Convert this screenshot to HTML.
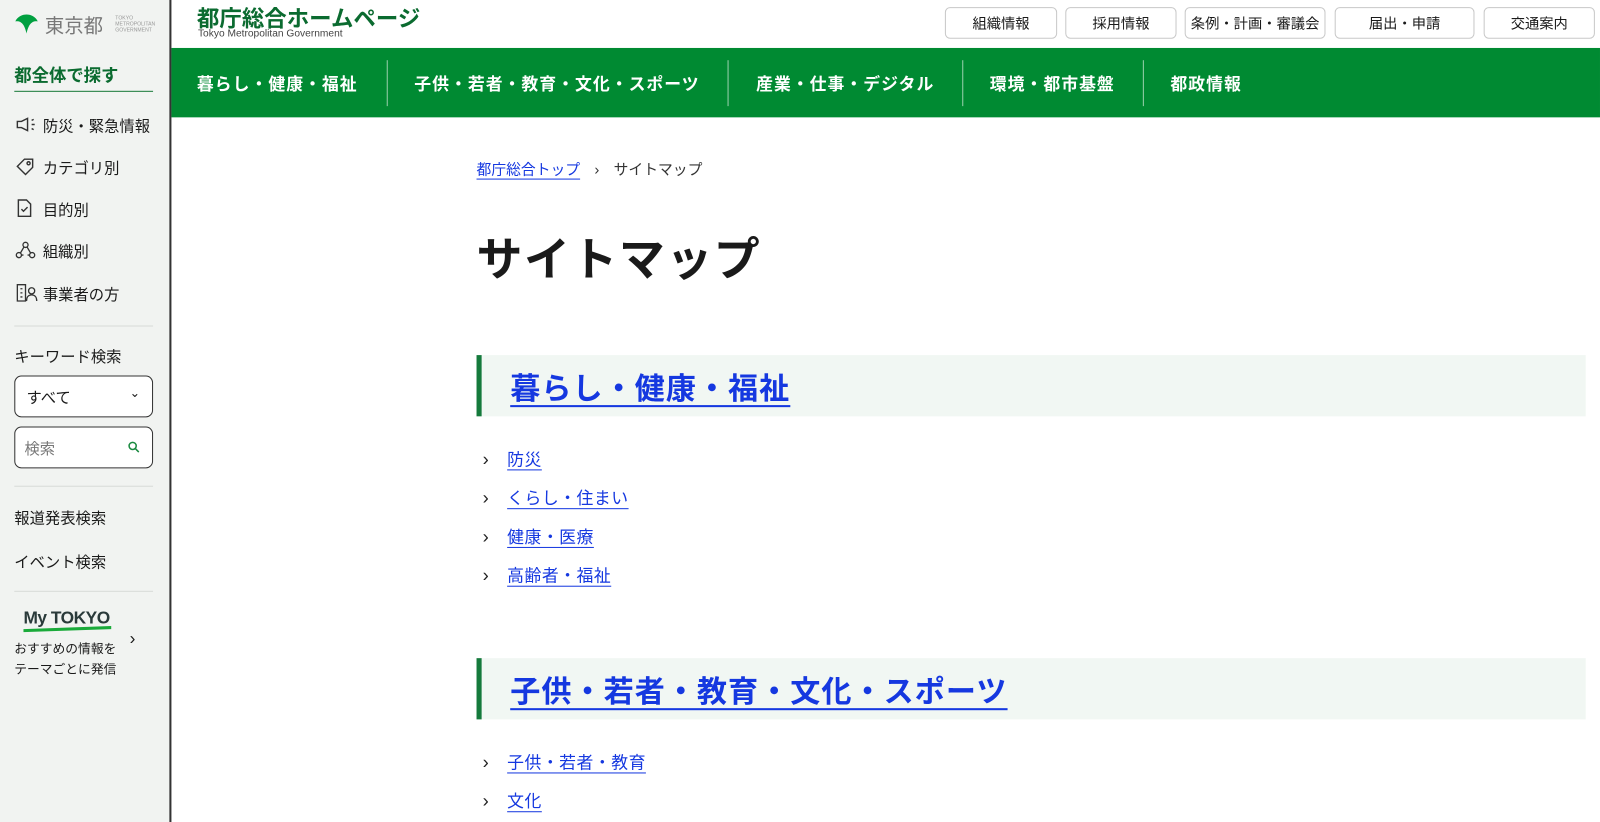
<!DOCTYPE html>
<html><head><meta charset="utf-8"><style>
*{margin:0;padding:0;box-sizing:border-box}
html,body{width:1600px;height:822px;overflow:hidden;background:#fff}
body{font-family:"Liberation Sans","Noto Sans CJK JP",sans-serif;color:#1a1a1a}
#w{position:absolute;left:0;top:0;width:1568px;height:806px;transform:scale(1.0204);transform-origin:0 0}
.a{position:absolute;white-space:nowrap}
#side{position:absolute;left:0;top:0;width:168px;height:806px;background:#f1f3f1;border-right:2px solid #333}
.si{font-size:15px;color:#1a1a1a}
.hr{position:absolute;left:14px;width:136px;height:1px;background:#d8dbd8}
.btn{position:absolute;top:7px;height:31px;border:1px solid #c8c8c8;border-radius:5px;font-size:14px;display:flex;align-items:center;justify-content:center;background:#fff}
#nav{position:absolute;left:168px;top:47px;width:1400px;height:68px;background:#008a32}
.ni{position:absolute;top:22px;color:#fff;font-weight:bold;font-size:16.5px;white-space:nowrap;letter-spacing:1px}
.dv{position:absolute;top:12px;width:1px;height:45px;background:rgba(255,255,255,.6)}
a{color:#1538e0;text-decoration:underline;text-decoration-thickness:1px}
.h2{position:absolute;left:467px;width:1087px;height:60px;background:#f1f7f3;border-left:5px solid #157a3c}
.h2 a{position:absolute;left:28px;top:10px;font-size:29.5px;font-weight:bold;text-underline-offset:6px;text-decoration-thickness:2px;white-space:nowrap;letter-spacing:1px}
.li{position:absolute;left:473px;font-size:16.5px;white-space:nowrap;letter-spacing:.5px}
.li span{display:inline-block;width:24px;color:#222;font-size:18px}
.li a{text-underline-offset:4px}
</style></head><body><div id="w">
<div id="side">
<svg class="a" style="left:14px;top:13px" width="24" height="22" viewBox="0 0 24 22"><path d="M1 8 C5 -1 19 -1 23 8 C18 7 14 10 12 20 C10 10 6 7 1 8Z" fill="#00a040"/></svg>
<div class="a" style="left:44px;top:11px;font-size:19px;color:#777">東京都</div>
<div class="a" style="left:113px;top:15px;font-size:5px;color:#999;line-height:6px">TOKYO<br>METROPOLITAN<br>GOVERNMENT</div>
<div class="a" style="left:14px;top:60px;font-size:17px;font-weight:bold;color:#0b6b30">都全体で探す</div>
<div class="a" style="left:14px;top:89px;width:136px;height:1px;background:#1a7a3a"></div>
<svg class="a" style="left:15px;top:114px" width="22" height="16" viewBox="0 0 22 16" fill="none" stroke="#333" stroke-width="1.4"><path d="M2 5h4l6-3v12l-6-3H2z"/><path d="M16 4l2-1M16 8h3M16 12l2 1"/></svg>
<div class="a si" style="left:42px;top:113px">防災・緊急情報</div>
<svg class="a" style="left:15px;top:154px" width="20" height="18" viewBox="0 0 20 18" fill="none" stroke="#333" stroke-width="1.4"><path d="M2 9l7-7h8v8l-7 7z"/><circle cx="13" cy="6" r="1.5"/></svg>
<div class="a si" style="left:42px;top:154px">カテゴリ別</div>
<svg class="a" style="left:16px;top:195px" width="16" height="18" viewBox="0 0 16 18" fill="none" stroke="#333" stroke-width="1.4"><path d="M2 1h8l4 4v12H2z"/><path d="M5 10l2 2 4-4"/></svg>
<div class="a si" style="left:42px;top:195px">目的別</div>
<svg class="a" style="left:15px;top:236px" width="20" height="18" viewBox="0 0 20 18" fill="none" stroke="#333" stroke-width="1.3"><circle cx="10" cy="4" r="2.5"/><circle cx="3.5" cy="14" r="2.5"/><circle cx="16.5" cy="14" r="2.5"/><path d="M8.5 6L5 12M11.5 6l3.5 6M6 14h2M12 14h2"/></svg>
<div class="a si" style="left:42px;top:236px">組織別</div>
<svg class="a" style="left:15px;top:278px" width="22" height="18" viewBox="0 0 22 18" fill="none" stroke="#333" stroke-width="1.3"><path d="M2 1h8v16H2zM5 5h2M5 9h2M5 13h2"/><circle cx="16" cy="7" r="3"/><path d="M11 17c0-4 2-6 5-6s5 2 5 6"/></svg>
<div class="a si" style="left:42px;top:278px">事業者の方</div>
<div class="hr" style="top:319px"></div>
<div class="a si" style="left:14px;top:339px">キーワード検索</div>
<div class="a" style="left:14px;top:368px;width:136px;height:41px;border:1px solid #333;border-radius:7px;background:#fff"><span class="a" style="left:11px;top:10px;font-size:15px">すべて</span><span class="a" style="left:112px;top:9px;font-size:12px">⌄</span></div>
<div class="a" style="left:14px;top:418px;width:136px;height:41px;border:1px solid #333;border-radius:7px;background:#fff"><span class="a" style="left:9px;top:10px;font-size:15px;color:#777">検索</span><svg class="a" style="left:110px;top:13px" width="12" height="12" viewBox="0 0 12 12" fill="none" stroke="#1a8a40" stroke-width="1.5"><circle cx="5" cy="5" r="3.5"/><path d="M7.5 7.5L11 11"/></svg></div>
<div class="hr" style="top:476px"></div>
<div class="a si" style="left:14px;top:497px">報道発表検索</div>
<div class="a si" style="left:14px;top:540px">イベント検索</div>
<div class="hr" style="top:579px"></div>
<div class="a" style="left:23px;top:596px;font-size:17px;font-weight:bold;color:#2a3a3a;letter-spacing:-.5px">My TOKYO</div>
<div class="a" style="left:23px;top:615px;width:86px;height:3px;background:#1aaa3a;transform:skewY(-2deg)"></div>
<div class="a" style="left:14px;top:626px;font-size:12.5px;line-height:20px">おすすめの情報を<br>テーマごとに発信</div>
<div class="a" style="left:127px;top:616px;font-size:17px">›</div>
</div>

<div class="a" style="left:193px;top:1px;font-size:22px;font-weight:bold;color:#0b6b30">都庁総合ホームページ</div>
<div class="a" style="left:194px;top:28px;font-size:10px;color:#444">Tokyo Metropolitan Government</div>
<div class="btn" style="left:926px;width:110px">組織情報</div>
<div class="btn" style="left:1044px;width:109px">採用情報</div>
<div class="btn" style="left:1161px;width:138px">条例・計画・審議会</div>
<div class="btn" style="left:1308px;width:137px">届出・申請</div>
<div class="btn" style="left:1454px;width:109px">交通案内</div>

<div id="nav">
<div class="ni" style="left:25px">暮らし・健康・福祉</div><div class="dv" style="left:211px"></div>
<div class="ni" style="left:238px">子供・若者・教育・文化・スポーツ</div><div class="dv" style="left:545px"></div>
<div class="ni" style="left:573px">産業・仕事・デジタル</div><div class="dv" style="left:775px"></div>
<div class="ni" style="left:802px">環境・都市基盤</div><div class="dv" style="left:952px"></div>
<div class="ni" style="left:979px">都政情報</div>
</div>

<div class="a" style="left:467px;top:155px;font-size:14.5px"><a style="text-underline-offset:4px">都庁総合トップ</a><span style="color:#333;margin:0 14px">›</span><span style="color:#333">サイトマップ</span></div>
<div class="a" style="left:467px;top:218px;font-size:45px;font-weight:bold;letter-spacing:1.5px">サイトマップ</div>

<div class="h2" style="top:348px"><a>暮らし・健康・福祉</a></div>
<div class="li" style="top:437px"><span>›</span><a>防災</a></div>
<div class="li" style="top:475px"><span>›</span><a>くらし・住まい</a></div>
<div class="li" style="top:513px"><span>›</span><a>健康・医療</a></div>
<div class="li" style="top:551px"><span>›</span><a>高齢者・福祉</a></div>

<div class="h2" style="top:645px"><a>子供・若者・教育・文化・スポーツ</a></div>
<div class="li" style="top:734px"><span>›</span><a>子供・若者・教育</a></div>
<div class="li" style="top:772px"><span>›</span><a>文化</a></div>
</div></body></html>
